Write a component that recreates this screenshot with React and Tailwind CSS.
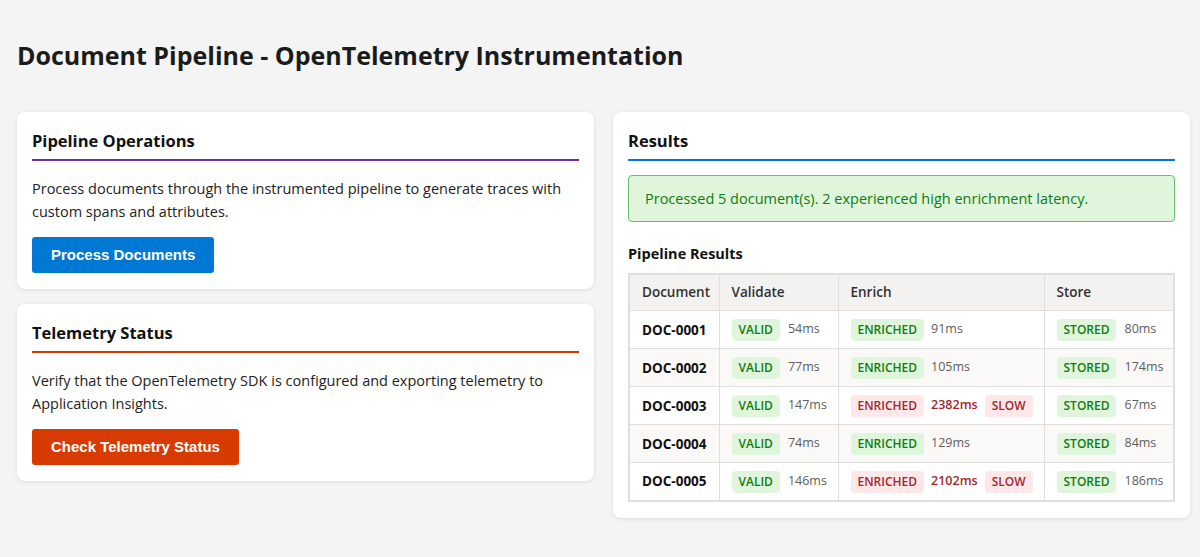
import React from 'react';

const rows = [
  { id: 'DOC-0001', v: '54ms', e: '91ms', s: '80ms' },
  { id: 'DOC-0002', v: '77ms', e: '105ms', s: '174ms' },
  { id: 'DOC-0003', v: '147ms', e: '2382ms', s: '67ms', slow: true },
  { id: 'DOC-0004', v: '74ms', e: '129ms', s: '84ms' },
  { id: 'DOC-0005', v: '146ms', e: '2102ms', s: '186ms', slow: true },
];

const font = { fontFamily: '"Open Sans", "Noto Sans", sans-serif' };
const btnFont = { fontFamily: '"Liberation Sans", Arial, sans-serif' };

const Badge = ({ children, bad }) => (
  <span
    className={`inline-flex items-center h-[22px] px-[7px] rounded-[4px] text-[12px] font-semibold ${
      bad ? 'bg-[#fde7e9] text-[#a4262c]' : 'bg-[#dff6dd] text-[#107c10]'
    }`}
  >
    {children}
  </span>
);

const Ms = ({ children, bad }) => (
  <span className={`text-[12.5px] ${bad ? 'text-[#a4262c] font-semibold' : 'text-[#605e5c]'}`}>{children}</span>
);

const Card = ({ title, line, children }) => (
  <div className="bg-white rounded-lg shadow-[0_1px_4px_rgba(0,0,0,0.1)] px-[15px] py-4">
    <h2 className={`text-[16.5px] leading-[25px] font-bold text-[#111] pb-[6px] border-b-2 ${line}`}>{title}</h2>
    {children}
  </div>
);

export default function App() {
  return (
    <div className="min-h-screen bg-[#f4f4f4] pl-[17px] pr-[10px] pt-[36px] pb-10" style={font}>
      <h1 className="text-[25px] font-bold text-[#1b1b1b] leading-[38px]">
        Document Pipeline - OpenTelemetry Instrumentation
      </h1>
      <div className="grid grid-cols-2 gap-[19px] mt-[38px] items-start">
        <div className="flex flex-col gap-[15px]">
          <Card title="Pipeline Operations" line="border-[#6b2fa0]">
            <p className="mt-[16px] text-[14.5px] leading-[23px] text-[#222]">
              Process documents through the instrumented pipeline to generate traces with custom spans and attributes.
            </p>
            <button
              className="mt-[14px] h-[36px] px-[19px] rounded-[3px] bg-[#0078d4] text-white text-[15px] font-bold"
              style={btnFont}
            >
              Process Documents
            </button>
          </Card>
          <Card title="Telemetry Status" line="border-[#d83b01]">
            <p className="mt-[16px] text-[14.5px] leading-[23px] text-[#222]">
              Verify that the OpenTelemetry SDK is configured and exporting telemetry to Application Insights.
            </p>
            <button
              className="mt-[14px] h-[36px] px-[19px] rounded-[3px] bg-[#d83b01] text-white text-[15px] font-bold"
              style={btnFont}
            >
              Check Telemetry Status
            </button>
          </Card>
        </div>
        <Card title="Results" line="border-[#0078d4]">
          <div className="mt-[14px] h-[47px] flex items-center px-4 rounded-[4px] border border-[#6bbf6b] bg-[#dff6dd] text-[#107c10] text-[14.5px] font-medium">
            Processed 5 document(s). 2 experienced high enrichment latency.
          </div>
          <h3 className="mt-[21px] text-[14.5px] font-bold text-[#111]">Pipeline Results</h3>
          <table className="mt-[8px] w-full table-fixed border-collapse border-2 border-[#e1dfdd] text-[13.5px]">
            <thead>
              <tr className="bg-[#f3f2f1] text-[#323130] h-[37px]">
                <th className="w-[90px] text-left font-semibold px-3 border border-[#e1dfdd]">Document</th>
                <th className="w-[119px] text-left font-semibold px-3 border border-[#e1dfdd]">Validate</th>
                <th className="w-[206px] text-left font-semibold px-3 border border-[#e1dfdd]">Enrich</th>
                <th className="text-left font-semibold px-3 border border-[#e1dfdd]">Store</th>
              </tr>
            </thead>
            <tbody>
              {rows.map((r, i) => (
                <tr key={r.id} className={`h-[38px] ${i % 2 ? 'bg-[#faf9f8]' : 'bg-white'}`}>
                  <td className="px-3 font-bold text-[#111] border border-[#e1dfdd] whitespace-nowrap">{r.id}</td>
                  <td className="px-3 border border-[#e1dfdd]">
                    <div className="flex items-center gap-2 whitespace-nowrap">
                      <Badge>VALID</Badge>
                      <Ms>{r.v}</Ms>
                    </div>
                  </td>
                  <td className="px-3 border border-[#e1dfdd]">
                    <div className="flex items-center gap-[7px] whitespace-nowrap">
                      <Badge bad={r.slow}>ENRICHED</Badge>
                      <Ms bad={r.slow}>{r.e}</Ms>
                      {r.slow && <Badge bad>SLOW</Badge>}
                    </div>
                  </td>
                  <td className="px-3 border border-[#e1dfdd]">
                    <div className="flex items-center gap-2 whitespace-nowrap">
                      <Badge>STORED</Badge>
                      <Ms>{r.s}</Ms>
                    </div>
                  </td>
                </tr>
              ))}
            </tbody>
          </table>
        </Card>
      </div>
    </div>
  );
}
